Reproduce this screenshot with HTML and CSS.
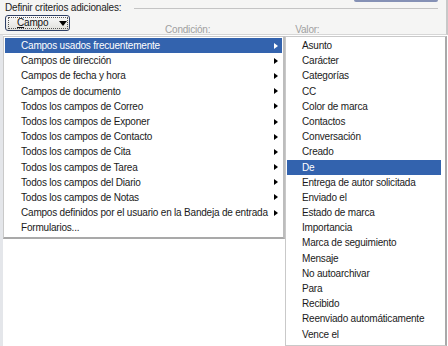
FILE: index.html
```html
<!DOCTYPE html>
<html lang="es">
<head>
<meta charset="utf-8">
<link rel="stylesheet" href="styles.css">
</head>
<body>
<div class="dialog">
  <div class="top">
    <div class="top-btn"></div>
    <div class="crit-row">
      <span class="crit-label">Definir criterios adicionales:</span>
      <span class="crit-line"></span>
    </div>
    <div class="field-row">
      <div class="campo-btn"><span class="focus"><span class="ul">C</span>ampo<span class="caret"></span></span></div>
      <span class="col-label cond">Condición:</span>
      <span class="col-label valor">Valor:</span>
    </div>
  </div>
  <div class="list"></div>

  <div class="menu main">
    <div class="item sel"><span>Campos usados frecuentemente</span><span class="arrow"></span></div>
    <div class="item"><span>Campos de dirección</span><span class="arrow"></span></div>
    <div class="item"><span>Campos de fecha y hora</span><span class="arrow"></span></div>
    <div class="item"><span>Campos de documento</span><span class="arrow"></span></div>
    <div class="item"><span>Todos los campos de Correo</span><span class="arrow"></span></div>
    <div class="item"><span>Todos los campos de Exponer</span><span class="arrow"></span></div>
    <div class="item"><span>Todos los campos de Contacto</span><span class="arrow"></span></div>
    <div class="item"><span>Todos los campos de Cita</span><span class="arrow"></span></div>
    <div class="item"><span>Todos los campos de Tarea</span><span class="arrow"></span></div>
    <div class="item"><span>Todos los campos del Diario</span><span class="arrow"></span></div>
    <div class="item"><span>Todos los campos de Notas</span><span class="arrow"></span></div>
    <div class="item"><span>Campos definidos por el usuario en la Bandeja de entrada</span><span class="arrow"></span></div>
    <div class="item"><span>Formularios...</span></div>
  </div>

  <div class="menu sub">
    <div class="item">Asunto</div>
    <div class="item">Carácter</div>
    <div class="item">Categorías</div>
    <div class="item">CC</div>
    <div class="item">Color de marca</div>
    <div class="item">Contactos</div>
    <div class="item">Conversación</div>
    <div class="item">Creado</div>
    <div class="item sel">De</div>
    <div class="item">Entrega de autor solicitada</div>
    <div class="item">Enviado el</div>
    <div class="item">Estado de marca</div>
    <div class="item">Importancia</div>
    <div class="item">Marca de seguimiento</div>
    <div class="item">Mensaje</div>
    <div class="item">No autoarchivar</div>
    <div class="item">Para</div>
    <div class="item">Recibido</div>
    <div class="item">Reenviado automáticamente</div>
    <div class="item">Vence el</div>
  </div>
</div>
</body>
</html>
```

FILE: styles.css
```css
html, body {
  margin: 0;
  padding: 0;
  background: #ffffff;
}
body {
  font-family: "Liberation Sans", Arial, sans-serif;
  font-size: 10px;
  letter-spacing: -0.2px;
  color: #1a1a1a;
  width: 448px;
  height: 346px;
  overflow: hidden;
}
.dialog {
  position: relative;
  width: 448px;
  height: 346px;
  display: flex;
  flex-direction: column;
}
.top {
  height: 34px;
  background: #f5f5f4;
  border-bottom: 1px solid #d6d6d6;
  border-right: 2px solid #c8c8c8;
  display: flex;
  flex-direction: column;
  position: relative;
}
.top-btn {
  position: absolute;
  left: 354px;
  top: 0;
  width: 84px;
  height: 2px;
  background: #8591b5;
  border-radius: 0 0 2px 2px;
}
.crit-row {
  display: flex;
  align-items: center;
  padding: 1px 8px 0 5px;
  height: 13px;
  gap: 13px;
}
.crit-label {
  color: #222;
}
.crit-line {
  flex: 1;
  height: 1px;
  background: #c4c4c4;
  margin-top: 1px;
}
.field-row {
  display: flex;
  align-items: flex-end;
  height: 17px;
  padding-left: 5px;
}
.campo-btn {
  width: 59px;
  height: 12px;
  border: 1px solid #2f4066;
  border-radius: 3px;
  background: linear-gradient(#fafafa, #e0e0dc);
  display: flex;
  align-items: center;
  padding: 1px 2px;
  box-sizing: content-box;
}
.focus {
  flex: 1;
  border: 1px dotted #555;
  height: 10px;
  line-height: 10px;
  padding-left: 8px;
  display: flex;
  align-items: center;
  color: #111;
}
.ul { text-decoration: underline; }
.caret {
  width: 0;
  height: 0;
  margin-left: 11px;
  border-left: 4px solid transparent;
  border-right: 4px solid transparent;
  border-top: 5px solid #000;
}
.col-label {
  color: #a0a0a0;
  line-height: 12px;
  margin-bottom: -5px;
}
.cond { margin-left: 95px; }
.valor { margin-left: 85px; }
.list {
  flex: 1;
  background: #ffffff;
  border-left: 3px solid #e4e6ea;
}
.menu {
  position: absolute;
  background: #ffffff;
  border: 1px solid #c9c9c9;
  box-sizing: border-box;
  padding: 1px;
}
.menu .item {
  height: 15.2px;
  line-height: 15.2px;
  white-space: nowrap;
  display: flex;
  align-items: center;
  justify-content: space-between;
}
.menu .item.sel {
  background: #3363ae;
  color: #ffffff;
}
.main {
  left: 3px;
  top: 36px;
  width: 282px;
  height: 203px;
  border-bottom: 2px solid #a9a9a9;
  border-right: 2px solid #bdbdbd;
}
.main .item {
  padding: 0 4px 0 16px;
}
.arrow {
  width: 0;
  height: 0;
  border-top: 3.5px solid transparent;
  border-bottom: 3.5px solid transparent;
  border-left: 4px solid #000;
}
.main .item.sel .arrow {
  border-left-color: #ffffff;
}
.sub {
  left: 285px;
  top: 36px;
  width: 162px;
  height: 310px;
  border-right: 2px solid #a9a9a9;
  padding-top: 1px;
}
.sub .item {
  padding-left: 15px;
  margin-right: 3px;
}
```
